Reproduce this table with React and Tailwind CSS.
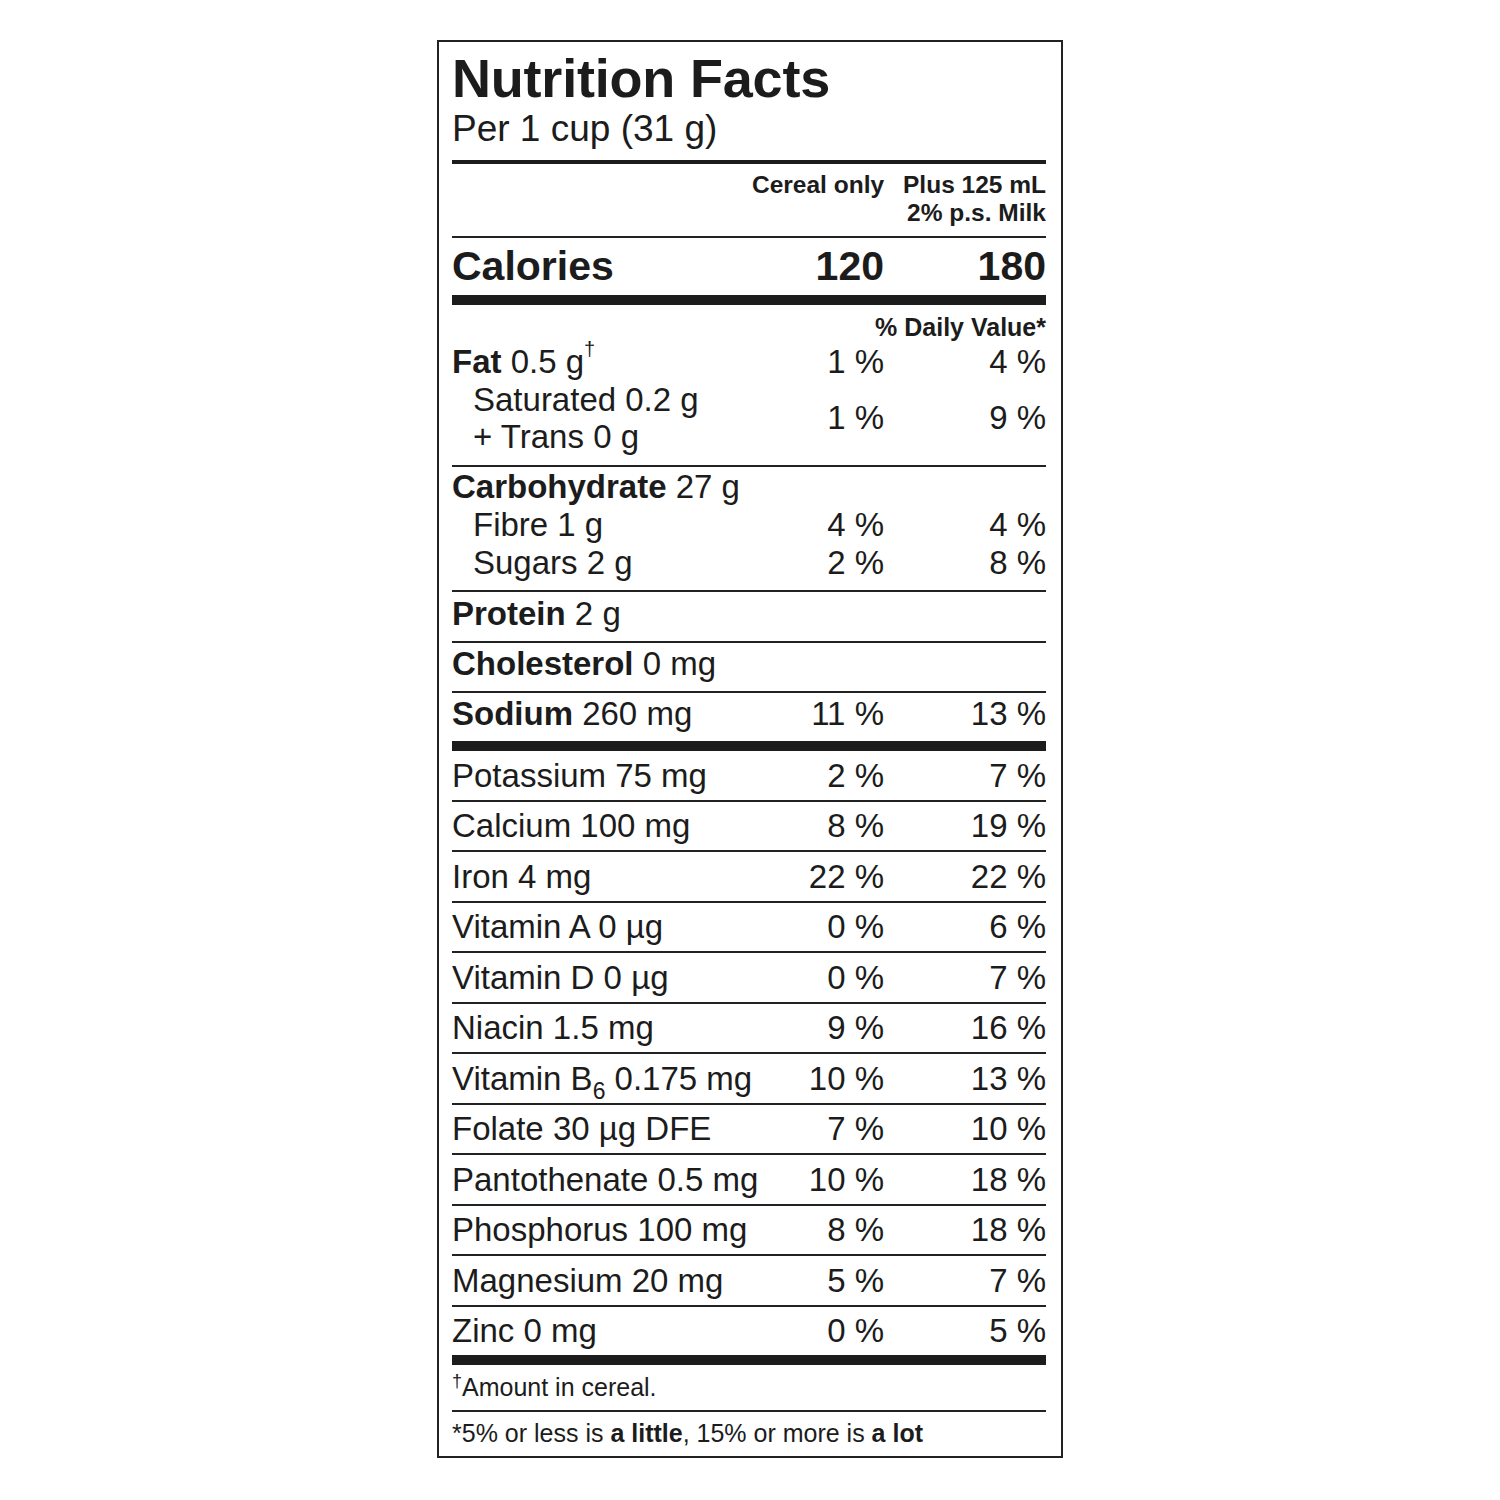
import React from "react";

const vit = [
  ["Potassium 75 mg", "2 %", "7 %"],
  ["Calcium 100 mg", "8 %", "19 %"],
  ["Iron 4 mg", "22 %", "22 %"],
  ["Vitamin A 0 µg", "0 %", "6 %"],
  ["Vitamin D 0 µg", "0 %", "7 %"],
  ["Niacin 1.5 mg", "9 %", "16 %"],
  ["B6", "10 %", "13 %"],
  ["Folate 30 µg DFE", "7 %", "10 %"],
  ["Pantothenate 0.5 mg", "10 %", "18 %"],
  ["Phosphorus 100 mg", "8 %", "18 %"],
  ["Magnesium 20 mg", "5 %", "7 %"],
  ["Zinc 0 mg", "0 %", "5 %"],
];

function Row({ label, a, b, className = "" }) {
  return (
    <div className={"flex items-center text-[33px] " + className}>
      <div className="flex-1 min-w-0 whitespace-nowrap">{label}</div>
      <div className="w-[130px] shrink-0 text-right whitespace-nowrap">{a}</div>
      <div className="w-[162px] shrink-0 text-right whitespace-nowrap">{b}</div>
    </div>
  );
}

export default function App() {
  return (
    <div
      className="min-h-screen bg-white flex justify-center pt-[40px] text-[#1c1c1c]"
      style={{ fontFamily: '"Liberation Sans", Arial, Helvetica, sans-serif' }}
    >
      <div className="w-[626px] h-[1418px] border-2 border-[#222] pl-[13px] pr-[15px] pt-[9px] flex flex-col">
        <div className="text-[54px] leading-[54px] font-bold tracking-[-0.2px]">Nutrition Facts</div>
        <div className="mt-[4px] text-[37px] leading-[40px]">Per 1 cup (31 g)</div>
        <div className="mt-[11px] h-[4px] shrink-0 bg-[#1c1c1c]" />

        <div className="pt-[7px] pb-[9px] border-b-2 border-[#222] flex text-[24.5px] leading-[28px] font-bold">
          <div className="flex-1" />
          <div className="w-[132px] shrink-0 text-right whitespace-nowrap">Cereal only</div>
          <div className="w-[162px] shrink-0 text-right whitespace-nowrap">
            <div>Plus 125 mL</div>
            <div>2% p.s. Milk</div>
          </div>
        </div>

        <div className="pt-[6px] pb-[7px] flex text-[41px] leading-[44px] font-bold">
          <div className="flex-1">Calories</div>
          <div className="w-[130px] shrink-0 text-right">120</div>
          <div className="w-[162px] shrink-0 text-right">180</div>
        </div>
        <div className="h-[10px] shrink-0 bg-[#1c1c1c]" />

        <div className="pt-[8px] text-[25px] leading-[28px] font-bold text-right">% Daily Value*</div>

        <div className="pt-[2px] pb-[9.5px] border-b-2 border-[#222] leading-[37.5px]">
          <Row
            label={
              <>
                <span className="font-bold">Fat</span> 0.5 g
                <sup className="text-[20px] relative top-[-5px] align-super leading-none">†</sup>
              </>
            }
            a="1 %"
            b="4 %"
          />
          <div className="flex items-center text-[33px]">
            <div className="flex-1 pl-[21px] whitespace-nowrap">
              <div>Saturated 0.2 g</div>
              <div>+ Trans 0 g</div>
            </div>
            <div className="w-[130px] shrink-0 text-right">1 %</div>
            <div className="w-[162px] shrink-0 text-right">9 %</div>
          </div>
        </div>

        <div className="pt-[1px] pb-[8px] border-b-2 border-[#222] leading-[38px]">
          <Row label={<><span className="font-bold">Carbohydrate</span> 27 g</>} a="" b="" />
          <Row label={<span className="pl-[21px]">Fibre 1 g</span>} a="4 %" b="4 %" />
          <Row label={<span className="pl-[21px]">Sugars 2 g</span>} a="2 %" b="8 %" />
        </div>

        <Row
          className="h-[51px] shrink-0 pb-[6px] border-b-2 border-[#222]"
          label={<><span className="font-bold">Protein</span> 2 g</>}
          a=""
          b=""
        />
        <Row
          className="h-[50px] shrink-0 pb-[6px] border-b-2 border-[#222]"
          label={<><span className="font-bold">Cholesterol</span> 0 mg</>}
          a=""
          b=""
        />
        <Row
          className="h-[48px] shrink-0 pb-[6px]"
          label={<><span className="font-bold">Sodium</span> 260 mg</>}
          a="11 %"
          b="13 %"
        />
        <div className="h-[10px] shrink-0 bg-[#1c1c1c]" />

        {vit.map(([label, a, b], i) => (
          <Row
            key={label}
            className={
              "shrink-0 " + (i < vit.length - 1 ? "h-[50.5px] border-b-2 border-[#222]" : "h-[48.5px]")
            }
            label={
              label === "B6" ? (
                <>
                  Vitamin B<sub className="text-[23px] relative top-[2px] align-sub leading-none">6</sub> 0.175 mg
                </>
              ) : (
                label
              )
            }
            a={a}
            b={b}
          />
        ))}
        <div className="h-[10px] shrink-0 bg-[#1c1c1c]" />

        <div className="h-[47px] shrink-0 border-b-2 border-[#222] flex items-center text-[25px]">
          <span>
            <sup className="text-[18px] relative top-[-9px] leading-none">†</sup>Amount in cereal.
          </span>
        </div>
        <div className="h-[43px] shrink-0 flex items-center text-[25px] whitespace-nowrap">
          <span>
            *5% or less is <span className="font-bold">a little</span>, 15% or more is{" "}
            <span className="font-bold">a lot</span>
          </span>
        </div>
      </div>
    </div>
  );
}
